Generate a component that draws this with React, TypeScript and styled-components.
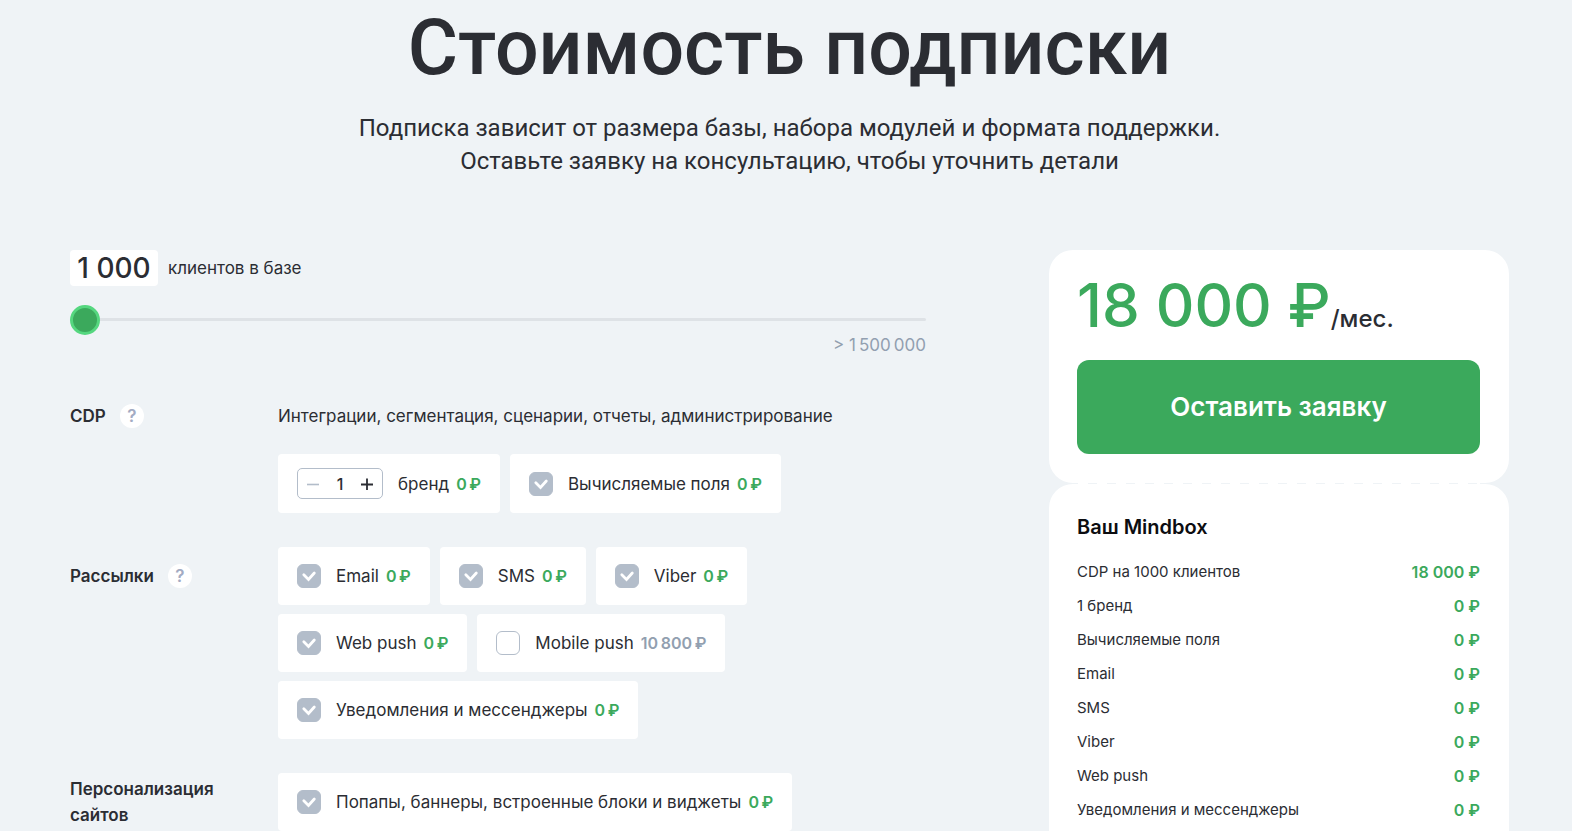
import React, { useState } from 'react';
import styled, { createGlobalStyle } from 'styled-components';

const color = {
  page: '#eff3f6',
  text: '#2b2d33',
  muted: '#929fb0',
  control: '#b3bdca',
  green: '#3ba95c',
  ring: '#55d77f',
  track: '#dee2e6',
};

const GlobalStyle = createGlobalStyle`
  * { box-sizing: border-box; }
  body {
    margin: 0;
    background: ${color.page};
    color: ${color.text};
    font: 400 17px/26px Inter, "Liberation Sans", sans-serif;
  }
  button, input { font: inherit; color: inherit; }
`;

const Page = styled.main`
  padding: 8px 63px 40px 70px;
`;

const Intro = styled.header`
  text-align: center;
  font-family: Roboto, "Liberation Sans", sans-serif;
`;

const Title = styled.h1`
  margin: 0 0 24px;
  font-size: 77px;
  line-height: 80px;
  font-weight: 500;
`;

const Subtitle = styled.p`
  margin: 0 0 72px;
  font-size: 24px;
  line-height: 33px;
`;

const Calculator = styled.div`
  display: flex;
  align-items: flex-start;
  gap: 123px;
`;

const Options = styled.form`
  flex: 1;
  min-width: 0;
`;

const SizeRow = styled.div`
  display: flex;
  align-items: center;
  gap: 10px;
  margin-bottom: 18px;
`;

const SizeInput = styled.input`
  width: 88px;
  height: 36px;
  padding: 0;
  border: 0;
  border-radius: 4px;
  background: #fff;
  font-size: 28px;
  font-weight: 500;
  text-align: center;
`;

const Slider = styled.input`
  display: block;
  appearance: none;
  width: 100%;
  height: 30px;
  margin: 0;
  background: none;

  &::-webkit-slider-runnable-track {
    height: 3px;
    border-radius: 2px;
    background: ${color.track};
  }
  &::-webkit-slider-thumb {
    appearance: none;
    width: 30px;
    height: 30px;
    margin-top: -13px;
    border: 3px solid ${color.ring};
    border-radius: 50%;
    background: ${color.green};
  }
`;

const SliderMax = styled.div`
  margin: 2px 0 33px;
  line-height: 18px;
  text-align: right;
  color: ${color.muted};
`;

const Group = styled.section`
  display: grid;
  grid-template-columns: 208px 1fr;
  margin-bottom: 34px;
`;

const GroupHead = styled.div`
  display: flex;
  align-items: center;
  gap: 14px;
  height: 58px;
`;

const GroupTitle = styled.h2`
  margin: 0;
  font-size: 17px;
  line-height: 26px;
  font-weight: 600;
`;

const Help = styled.button`
  width: 24px;
  height: 24px;
  padding: 0;
  border: 0;
  border-radius: 50%;
  background: #fff;
  color: #a3abc3;
  font-size: 17px;
  line-height: 24px;
  font-weight: 600;
`;

const Description = styled.p`
  display: flex;
  align-items: center;
  height: 58px;
  margin: 0 0 9px;
`;

const Chips = styled.div`
  display: flex;
  flex-wrap: wrap;
  gap: 9px 10px;
  max-width: 520px;
`;

const Chip = styled.div`
  display: flex;
  align-items: center;
  gap: 15px;
  min-height: 58px;
  padding: 14px 19px;
  border-radius: 4px;
  background: #fff;
  white-space: nowrap;
`;

const ChipText = styled.span`
  display: flex;
  align-items: baseline;
  gap: 7px;
`;

const Price = styled.span<{ $off?: boolean }>`
  color: ${(p) => (p.$off ? color.muted : color.green)};
  font-size: 16px;
  font-weight: 600;
`;

const CheckBox = styled.span`
  display: grid;
  width: 24px;
  height: 24px;

  & > * { grid-area: 1 / 1; }
`;

const CheckInput = styled.input`
  appearance: none;
  width: 24px;
  height: 24px;
  margin: 0;
  border: 1px solid ${color.control};
  border-radius: 6px;
  background: #fff;

  &:checked { background: ${color.control}; }
`;

const Tick = styled.svg`
  pointer-events: none;
  z-index: 1;
`;

const Stepper = styled.div`
  display: flex;
  align-items: center;
  width: 86px;
  height: 31px;
  border: 1px solid ${color.control};
  border-radius: 5px;
`;

const StepButton = styled.button`
  display: flex;
  align-items: center;
  justify-content: center;
  width: 30px;
  height: 29px;
  padding: 0;
  border: 0;
  background: none;

  &:disabled { color: ${color.control}; }
`;

const StepInput = styled.input`
  width: 24px;
  height: 29px;
  padding: 0;
  border: 0;
  background: none;
  font-size: 16px;
  font-weight: 500;
  text-align: center;
`;

const Summary = styled.aside`
  width: 460px;
  flex: none;
`;

const Card = styled.div<{ $top: number }>`
  padding: ${(p) => p.$top}px 29px 29px 28px;
  border-radius: 24px;
  background: #fff;
`;

const Total = styled.p`
  display: flex;
  align-items: baseline;
  margin: 0 0 20px;
  font-weight: 500;
`;

const TotalSum = styled.span`
  color: ${color.green};
  font-size: 60px;
  line-height: 70px;
`;

const Period = styled.span`
  font-size: 24px;
  line-height: 26px;
`;

const Submit = styled.button`
  display: block;
  width: 100%;
  height: 94px;
  border: 0;
  border-radius: 12px;
  background: ${color.green};
  color: #fff;
  font-size: 26px;
  font-weight: 600;
`;

const Perforation = styled.div`
  height: 1px;
  margin: 0 29px;
  background: repeating-linear-gradient(90deg, #fff 0 10px, ${color.page} 10px 19px);
`;

const CardTitle = styled.h2`
  margin: 0 0 14px;
  color: #0c0d10;
  font-size: 20px;
  line-height: 28px;
  font-weight: 600;
`;

const Table = styled.table`
  width: 100%;
  border-collapse: collapse;
`;

const RowName = styled.th`
  height: 34px;
  padding: 0;
  font-size: 15px;
  font-weight: 400;
  text-align: left;
`;

const RowPrice = styled.td`
  height: 34px;
  padding: 0;
  color: ${color.green};
  font-size: 16px;
  font-weight: 600;
  text-align: right;
`;

type OptionProps = { id: string; label: string; price: string; initial?: boolean };

function Option({ id, label, price, initial = true }: OptionProps) {
  const [checked, setChecked] = useState(initial);
  return (
    <Chip>
      <CheckBox>
        <CheckInput id={id} type="checkbox" checked={checked} onChange={(e) => setChecked(e.target.checked)} />
        {checked && (
          <Tick width="24" height="24" viewBox="0 0 24 24" fill="none" aria-hidden="true">
            <path d="M6.8 10.8 L11.5 15.4 L17.3 9" stroke="#fff" strokeWidth="2.8" strokeLinecap="round" />
          </Tick>
        )}
      </CheckBox>
      <ChipText>
        <label htmlFor={id}>{label}</label>
        <Price $off={!checked}>{price}</Price>
      </ChipText>
    </Chip>
  );
}

function Brands() {
  const [count, setCount] = useState(1);
  return (
    <Chip>
      <Stepper>
        <StepButton type="button" aria-label="Меньше" disabled={count === 1} onClick={() => setCount(count - 1)}>
          <svg width="12" height="12" viewBox="0 0 12 12" aria-hidden="true">
            <path d="M0 6.5 H12" stroke="currentColor" strokeWidth="1.6" />
          </svg>
        </StepButton>
        <StepInput id="brands" inputMode="numeric" value={count} readOnly />
        <StepButton type="button" aria-label="Больше" onClick={() => setCount(count + 1)}>
          <svg width="12" height="12" viewBox="0 0 12 12" aria-hidden="true">
            <path d="M0 6.5 H12 M6 0.5 V12" stroke="currentColor" strokeWidth="1.8" />
          </svg>
        </StepButton>
      </Stepper>
      <ChipText>
        <label htmlFor="brands">бренд</label>
        <Price>{'0\u2009₽'}</Price>
      </ChipText>
    </Chip>
  );
}

const free = '0\u2009₽';

const rows: [string, string][] = [
  ['CDP на 1000 клиентов', '18 000 ₽'],
  ['1 бренд', '0 ₽'],
  ['Вычисляемые поля', '0 ₽'],
  ['Email', '0 ₽'],
  ['SMS', '0 ₽'],
  ['Viber', '0 ₽'],
  ['Web push', '0 ₽'],
  ['Уведомления и мессенджеры', '0 ₽'],
];

export default function App() {
  const [size, setSize] = useState(1000);
  return (
    <>
      <GlobalStyle />
      <Page>
        <Intro>
          <Title>Стоимость подписки</Title>
          <Subtitle>
            Подписка зависит от размера базы, набора модулей и формата поддержки.
            <br />
            Оставьте заявку на консультацию, чтобы уточнить детали
          </Subtitle>
        </Intro>
        <Calculator>
          <Options>
            <SizeRow>
              <SizeInput id="size" value={String(size).replace(/\B(?=(\d{3})+$)/g, '\u00a0')} readOnly />
              <label htmlFor="size">клиентов в базе</label>
            </SizeRow>
            <Slider
              type="range"
              aria-label="Клиентов в базе"
              min={1000}
              max={1500000}
              step={1000}
              value={size}
              onChange={(e) => setSize(Number(e.target.value))}
            />
            <SliderMax>{'> 1\u2009500\u2009000'}</SliderMax>

            <Group>
              <GroupHead>
                <GroupTitle>CDP</GroupTitle>
                <Help type="button">?</Help>
              </GroupHead>
              <div>
                <Description>Интеграции, сегментация, сценарии, отчеты, администрирование</Description>
                <Chips>
                  <Brands />
                  <Option id="fields" label="Вычисляемые поля" price={free} />
                </Chips>
              </div>
            </Group>

            <Group>
              <GroupHead>
                <GroupTitle>Рассылки</GroupTitle>
                <Help type="button">?</Help>
              </GroupHead>
              <Chips>
                <Option id="email" label="Email" price={free} />
                <Option id="sms" label="SMS" price={free} />
                <Option id="viber" label="Viber" price={free} />
                <Option id="web-push" label="Web push" price={free} />
                <Option id="mobile-push" label="Mobile push" price={'10\u2009800\u2009₽'} initial={false} />
                <Option id="messengers" label="Уведомления и мессенджеры" price={free} />
              </Chips>
            </Group>

            <Group>
              <GroupHead>
                <GroupTitle>
                  Персонализация
                  <br />
                  сайтов
                </GroupTitle>
              </GroupHead>
              <Chips>
                <Option id="popups" label="Попапы, баннеры, встроенные блоки и виджеты" price={free} />
              </Chips>
            </Group>
          </Options>

          <Summary>
            <Card $top={20}>
              <Total>
                <TotalSum>18 000 ₽</TotalSum>
                <Period>/мес.</Period>
              </Total>
              <Submit type="button">Оставить заявку</Submit>
            </Card>
            <Perforation />
            <Card $top={29}>
              <CardTitle>Ваш Mindbox</CardTitle>
              <Table>
                <tbody>
                  {rows.map(([name, price]) => (
                    <tr key={name}>
                      <RowName scope="row">{name}</RowName>
                      <RowPrice>{price}</RowPrice>
                    </tr>
                  ))}
                </tbody>
              </Table>
            </Card>
          </Summary>
        </Calculator>
      </Page>
    </>
  );
}
